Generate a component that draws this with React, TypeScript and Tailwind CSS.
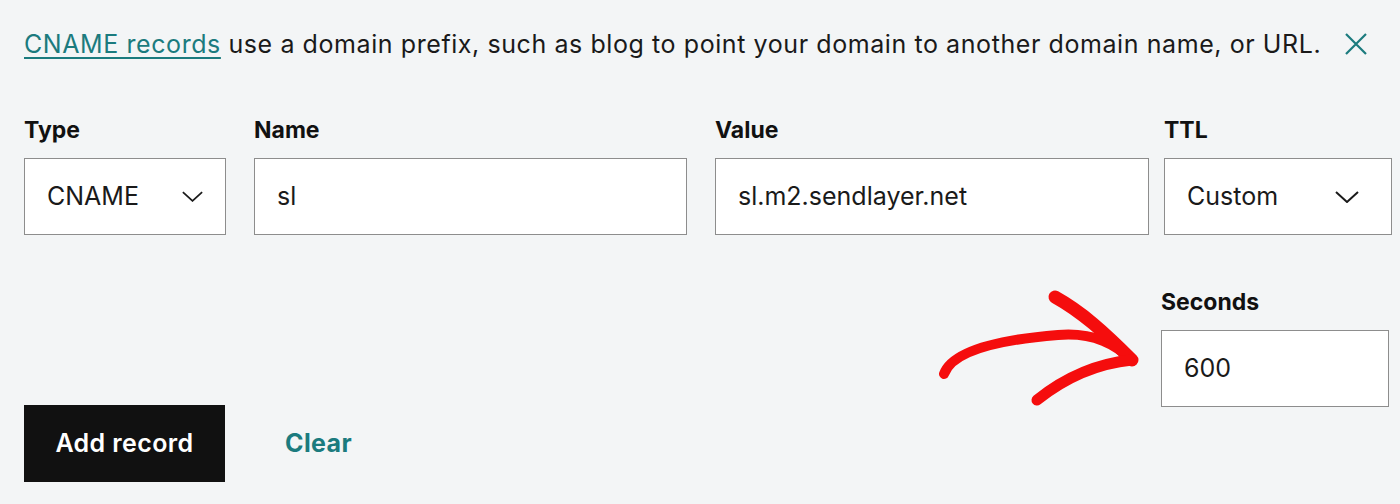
import React from "react";

const font = { fontFamily: "Inter, 'Liberation Sans', sans-serif" };

function Chevron({ className }: { className?: string }) {
  return (
    <svg viewBox="0 0 24 12" className={className} fill="none" stroke="#1a1a1a" strokeWidth={2}>
      <path d="M1 1 L12 11 L23 1" />
    </svg>
  );
}

function Field({ label, width, children }: { label: string; width: string; children: React.ReactNode }) {
  return (
    <div className={`flex flex-col ${width}`}>
      <div className="text-[23px] font-bold text-[#111] leading-[28px] h-[28px]">{label}</div>
      <div className="mt-[14px] h-[77px] border border-[#8d8d8d] bg-white flex items-center px-[22px] text-[25px] text-[#1a1a1a]">
        {children}
      </div>
    </div>
  );
}

export default function App() {
  return (
    <div className="relative w-[1400px] h-[504px] overflow-hidden bg-[#f3f5f6]" style={font}>
      {/* info banner */}
      <div className="flex items-center pl-[24px] pt-[29px]">
        <p className="text-[25px] leading-[30px] text-[#1a1a1a] tracking-[0.58px]">
          <a className="text-[#1b7b7e] underline underline-offset-[4px] decoration-[2px]">CNAME records</a> use a domain
          prefix, such as blog to point your domain to another domain name, or URL.
        </p>
        <svg viewBox="0 0 22 22" className="ml-[24px] w-[22px] h-[22px]" fill="none" stroke="#1b7b7e" strokeWidth={2.2}>
          <path d="M1 1 L21 21 M21 1 L1 21" />
        </svg>
      </div>

      {/* record fields */}
      <div className="flex items-start pl-[24px] mt-[57px]">
        <Field label="Type" width="w-[202px]">
          <span className="flex-1">CNAME</span>
          <Chevron className="w-[21px] h-[11px]" />
        </Field>
        <div className="ml-[28px]">
          <Field label="Name" width="w-[433px]">
            <span>sl</span>
          </Field>
        </div>
        <div className="ml-[28px]">
          <Field label="Value" width="w-[434px]">
            <span>sl.m2.sendlayer.net</span>
          </Field>
        </div>
        <div className="ml-[15px]">
          <Field label="TTL" width="w-[228px]">
            <span className="flex-1">Custom</span>
            <Chevron className="w-[24px] h-[12px] mr-[10px]" />
          </Field>
        </div>
      </div>

      {/* seconds + actions */}
      <div className="flex items-start pl-[24px] mt-[53px]">
        <div className="flex items-center mt-[117px]">
          <button className="w-[201px] h-[77px] bg-[#111] text-white text-[25px] font-semibold tracking-[0.4px]">Add record</button>
          <button className="ml-[60px] text-[25px] font-bold text-[#1b7b7e] tracking-[0.4px]">Clear</button>
        </div>
        <div className="ml-auto mr-[11px]">
          <Field label="Seconds" width="w-[228px]">
            <span>600</span>
          </Field>
        </div>
      </div>

      {/* red hand-drawn arrow */}
      <svg className="absolute left-0 top-0 pointer-events-none" width="1400" height="504" fill="none" stroke="#f50d0d" strokeLinecap="round" strokeLinejoin="round">
        <path d="M944 374 C952 352, 995 340, 1058 335 C1095 332, 1116 345, 1132 360" strokeWidth={10} />
        <path d="M1055 297 C1082 312, 1104 332, 1132 360" strokeWidth={13} />
        <path d="M1132 360 C1092 364, 1062 380, 1037 400" strokeWidth={11} />
      </svg>
    </div>
  );
}
